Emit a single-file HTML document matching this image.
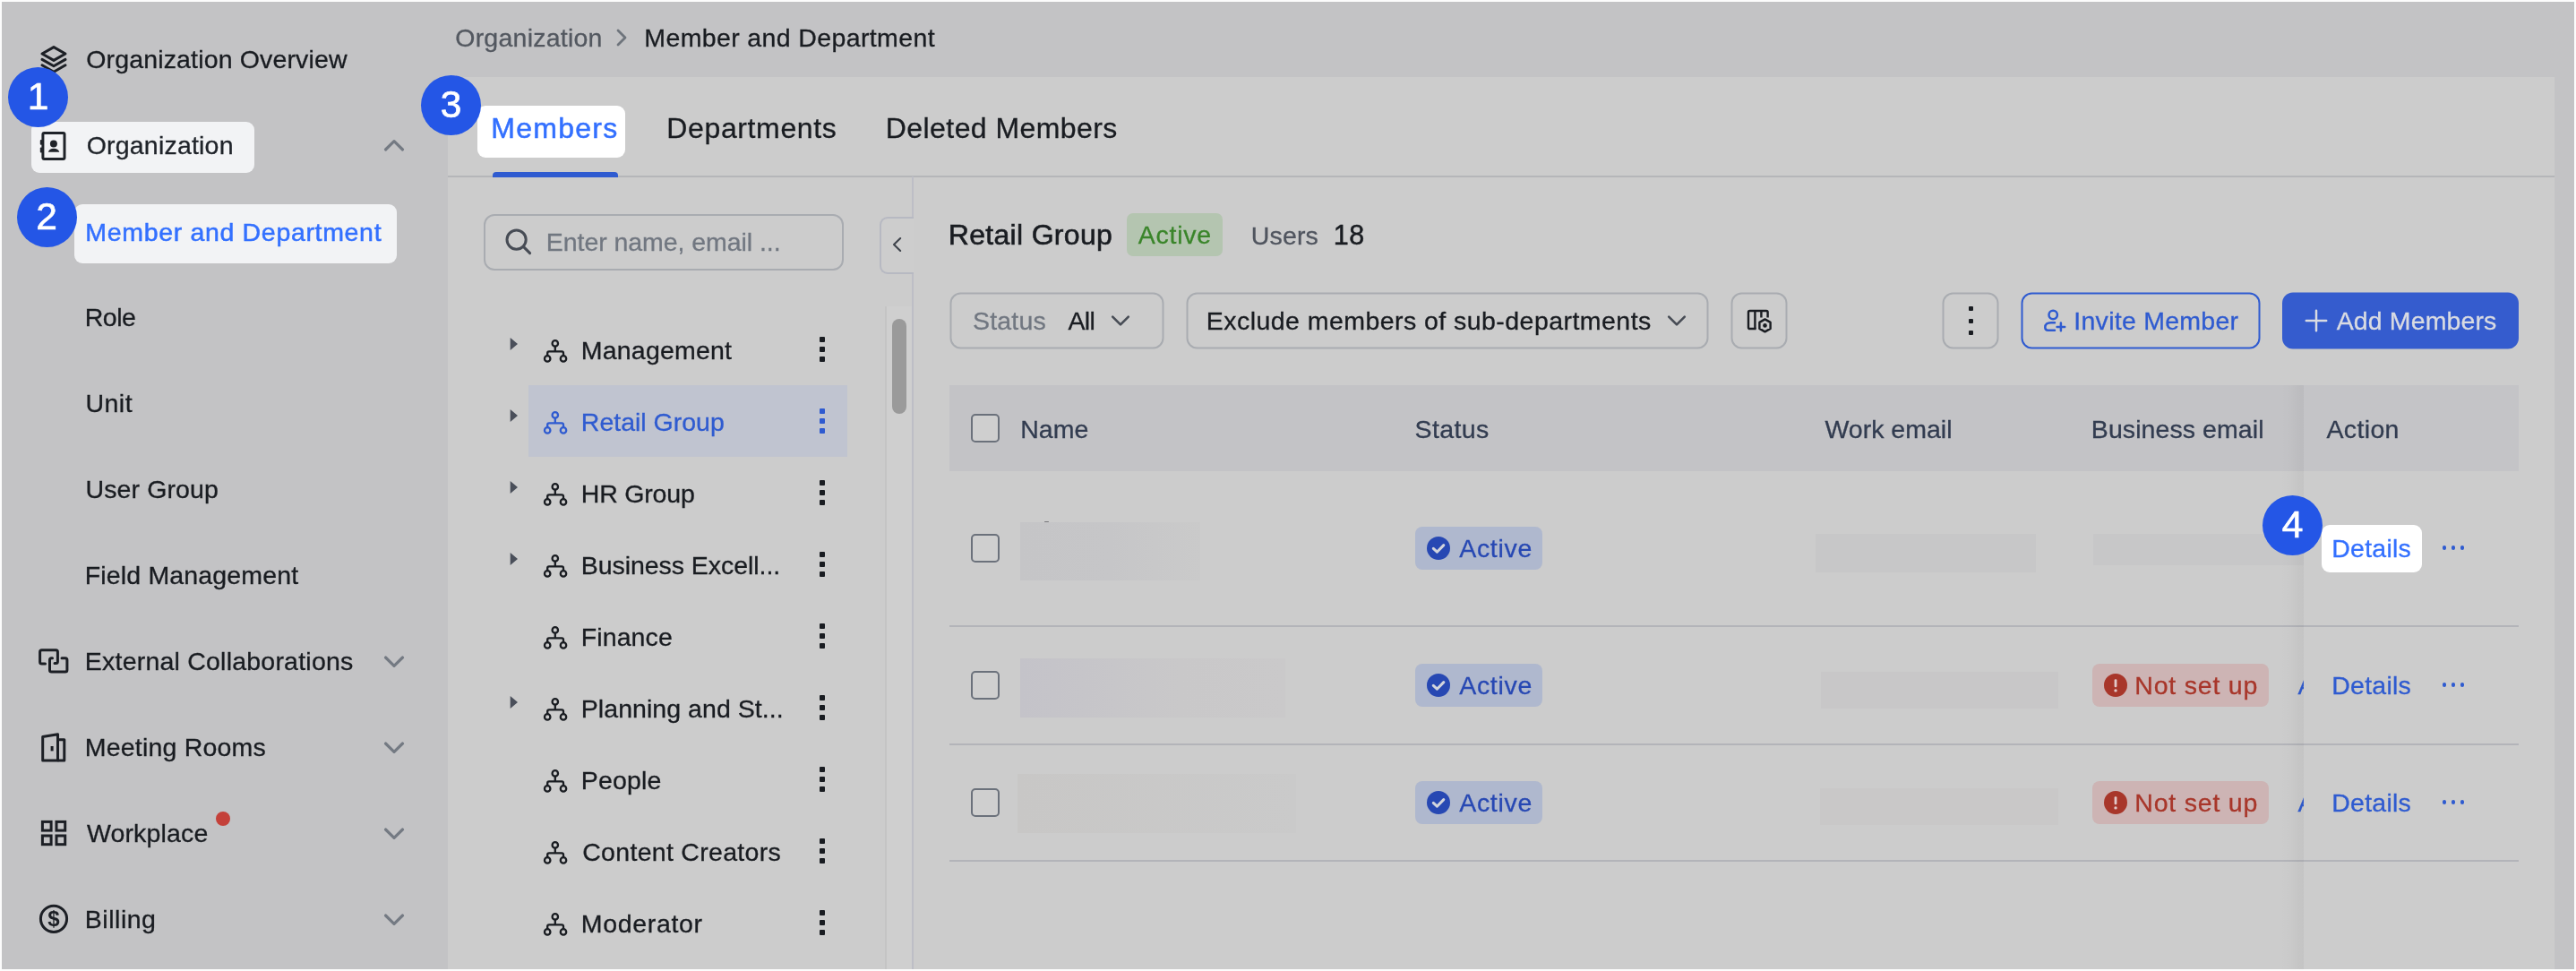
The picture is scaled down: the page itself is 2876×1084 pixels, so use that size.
<!DOCTYPE html>
<html lang="en">
<head>
<meta charset="utf-8">
<title>Member and Department</title>
<style>
html,body{margin:0;padding:0;}
body{width:2876px;height:1084px;overflow:hidden;background:#fdfdfd;font-family:"Liberation Sans",sans-serif;}
#w{will-change:transform;position:absolute;left:0;top:0;width:2876px;height:1084px;overflow:hidden;}
#w div,#w span,#w svg{position:absolute;box-sizing:border-box;}
#w svg{z-index:3;overflow:visible;}
.t{white-space:pre;z-index:3;}
.app{left:2px;top:2px;width:2872px;height:1080px;background:#c3c3c5;}
.panel{left:500px;top:86px;width:2352px;height:996px;background:#cccccc;}
.hl{border-radius:9px;z-index:5;}
.num{width:67px;height:67px;border-radius:50%;background:#2456e6;color:#fff;font-size:42.5px;line-height:65px;text-align:center;z-index:7;-webkit-text-stroke:0.7px #fff;}
.sel{border:2px solid #a9acb1;border-radius:12px;height:63px;top:326px;transform:translate(.5px,.5px);}
.cb{width:32px;height:32px;left:1084px;border:2px solid #6b717b;border-radius:5px;background:#cfcfcf;}
.sep{left:1060px;width:1752px;height:2px;background:#b3b4b9;}
.bdg{border-radius:8px;height:47.5px;}
.blur{background:#c7c7c8;}
.kb{width:6px;height:6px;background:#191c21;border-radius:1px;}
.dot{width:4.4px;height:4.4px;border-radius:50%;background:#2f5bd0;z-index:4;}
.frame{left:0;top:0;width:2876px;height:1084px;border:2px solid #fcfcfc;z-index:20;}
</style>
</head>
<body>
<div id="w">
<div class="app"></div>
<div class="panel"></div>

<!-- highlights -->
<div class="hl" style="left:35px;top:135.5px;width:248.5px;height:57px;background:#f2f3f5;"></div>
<div class="hl" style="left:83.3px;top:228.2px;width:359.7px;height:66.2px;background:#f2f3f5;"></div>
<div class="hl" style="left:533px;top:117.5px;width:164.5px;height:58.5px;background:#fff;"></div>
<div class="hl" style="left:2591.6px;top:586px;width:112.2px;height:52.5px;background:#fff;"></div>

<!-- step numbers -->
<div class="num" style="left:9px;top:75px;">1</div>
<div class="num" style="left:18.5px;top:209px;">2</div>
<div class="num" style="left:470px;top:83.5px;">3</div>
<div class="num" style="left:2526px;top:553px;">4</div>

<!-- tabs line -->
<div style="left:500px;top:196px;width:2352px;height:2px;background:linear-gradient(#c2c3c5 0,#c2c3c5 25%,#b5b6b9 25%);"></div>
<div style="left:550px;top:192px;width:140px;height:6px;background:#2f5bd0;border-radius:4px 4px 0 0;"></div>

<!-- sidebar icons -->
<svg style="left:44px;top:50px;width:32px;height:34px;" viewBox="0 0 32 34" fill="none"><g stroke="#1c1f25" stroke-width="3" stroke-linejoin="round" stroke-linecap="round"><path d="M16 2.6 L29 10 L16 17.4 L3 10 Z"/><path d="M3 16.4 L16 23.8 L29 16.4"/><path d="M3 22.8 L16 30.2 L29 22.8"/></g></svg>
<svg style="left:44px;top:146px;width:32px;height:34px;z-index:6;" viewBox="0 0 32 34" fill="none"><rect x="3.9" y="2.6" width="24.1" height="28.9" rx="1.5" stroke="#1f2329" stroke-width="3"/><rect x="0.8" y="10" width="2.4" height="5.8" rx="1" fill="#1f2329"/><rect x="0.8" y="18.6" width="2.4" height="6" rx="1" fill="#1f2329"/><circle cx="15.9" cy="14.6" r="4" fill="#1f2329"/><path d="M9.9 23.8 C10.5 21.2 13 19.7 16 19.7 C19 19.7 21.6 21.2 22.3 23.8 Z" fill="#1f2329"/></svg>
<svg style="left:42px;top:723px;width:36px;height:30px;" viewBox="0 0 36 30" fill="none"><g stroke="#1c1f25" stroke-width="3" stroke-linecap="round" stroke-linejoin="round"><path d="M8.5 18 H4.6 Q2.6 18 2.6 16 V4.7 Q2.6 2.7 4.6 2.7 H20.4 Q22.4 2.7 22.4 4.7 V15.5 Q22.4 17.5 20.4 17.5 H19"/><path d="M27 11.7 H30.9 Q32.9 11.7 32.9 13.7 V24.9 Q32.9 26.9 30.9 26.9 H15.5 Q13.5 26.9 13.5 24.9 V13.7 Q13.5 11.7 15.5 11.7 H16.5"/></g></svg>
<svg style="left:44px;top:816px;width:32px;height:36px;" viewBox="0 0 32 36" fill="none"><g stroke="#1c1f25" stroke-width="3" stroke-linejoin="round" stroke-linecap="butt"><path d="M3.7 6.6 L20.5 3.7 V33 H3.7 Z"/><path d="M20.5 9.8 H27.8 V33 H20.5"/></g><rect x="12.6" y="17" width="3" height="5.4" fill="#1c1f25"/></svg>
<svg style="left:44px;top:914px;width:32px;height:32px;" viewBox="0 0 32 32" fill="none"><g stroke="#1c1f25" stroke-width="3"><rect x="3.4" y="3.4" width="9.7" height="9.7"/><rect x="19" y="3.4" width="9.7" height="9.7"/><rect x="3.4" y="19" width="9.7" height="9.7"/><rect x="19" y="19" width="9.7" height="9.7"/></g></svg>
<svg style="left:42px;top:1008px;width:36px;height:36px;" viewBox="0 0 36 36" fill="none"><circle cx="18" cy="17.8" r="14.6" stroke="#1c1f25" stroke-width="3"/><text x="18" y="26" text-anchor="middle" font-family="Liberation Sans, sans-serif" font-weight="700" font-size="24" fill="#1c1f25">$</text></svg>
<div style="left:241px;top:906px;width:16px;height:16px;border-radius:50%;background:#c4413a;"></div>
<svg style="left:426px;top:152px;width:28px;height:20px;" viewBox="0 0 28 20" fill="none"><path d="M4.5 15 L14 5.7 L23.5 15" stroke="#747a83" stroke-width="3.2" stroke-linecap="round" stroke-linejoin="round"/></svg>
<svg style="left:426px;top:728.6px;width:28px;height:20px;" viewBox="0 0 28 20" fill="none"><path d="M4.5 5 L14 14.3 L23.5 5" stroke="#747a83" stroke-width="3.2" stroke-linecap="round" stroke-linejoin="round"/></svg>
<svg style="left:426px;top:824.6px;width:28px;height:20px;" viewBox="0 0 28 20" fill="none"><path d="M4.5 5 L14 14.3 L23.5 5" stroke="#747a83" stroke-width="3.2" stroke-linecap="round" stroke-linejoin="round"/></svg>
<svg style="left:426px;top:920.6px;width:28px;height:20px;" viewBox="0 0 28 20" fill="none"><path d="M4.5 5 L14 14.3 L23.5 5" stroke="#747a83" stroke-width="3.2" stroke-linecap="round" stroke-linejoin="round"/></svg>
<svg style="left:426px;top:1016.6px;width:28px;height:20px;" viewBox="0 0 28 20" fill="none"><path d="M4.5 5 L14 14.3 L23.5 5" stroke="#747a83" stroke-width="3.2" stroke-linecap="round" stroke-linejoin="round"/></svg>
<svg style="left:686px;top:30px;width:16px;height:24px;" viewBox="0 0 16 24" fill="none"><path d="M4 4 L12 12 L4 20" stroke="#6e747c" stroke-width="2.8" stroke-linecap="round" stroke-linejoin="round"/></svg>
<svg style="left:562px;top:253px;width:34px;height:34px;" viewBox="0 0 34 34" fill="none"><circle cx="14.6" cy="14.6" r="10.6" stroke="#474c55" stroke-width="3"/><path d="M22.6 22.6 L29.6 29.6" stroke="#474c55" stroke-width="3" stroke-linecap="round"/></svg>
<svg style="left:992px;top:261px;width:20px;height:24px;" viewBox="0 0 20 24" fill="none"><path d="M13.2 5 L6 12 L13.2 19" stroke="#3f444c" stroke-width="2.1" stroke-linecap="round" stroke-linejoin="round"/></svg>
<svg style="left:1238px;top:348px;width:26px;height:20px;" viewBox="0 0 26 20" fill="none"><path d="M4.2 5.6 L13 14.4 L21.8 5.6" stroke="#474c55" stroke-width="2.6" stroke-linecap="round" stroke-linejoin="round"/></svg>
<svg style="left:1859px;top:348px;width:26px;height:20px;" viewBox="0 0 26 20" fill="none"><path d="M4.2 5.6 L13 14.4 L21.8 5.6" stroke="#474c55" stroke-width="2.6" stroke-linecap="round" stroke-linejoin="round"/></svg>
<svg style="left:1948px;top:343px;width:32px;height:32px;" viewBox="0 0 32 32" fill="none"><g stroke="#191c21" stroke-width="2.4" stroke-linejoin="round" stroke-linecap="butt"><path d="M12.6 24 H5.6 Q4 24 4 22.4 V5.6 Q4 4 5.6 4 H24 Q25.6 4 25.6 5.6 V11.5"/><path d="M11.4 4 V24"/><path d="M18.4 4 V11.5"/><path d="M22.5 13.4 L28.6 16.9 V23.9 L22.5 27.4 L16.4 23.9 V16.9 Z"/></g><circle cx="22.5" cy="20.4" r="2.3" fill="#191c21"/></svg>
<svg style="left:2280px;top:343px;width:28px;height:30px;" viewBox="0 0 28 30" fill="none"><g stroke="#2f5bd0" stroke-width="2.5" stroke-linecap="round" stroke-linejoin="round"><circle cx="12.2" cy="8.5" r="4.7"/><path d="M14 17.3 H10 Q3.3 17.3 3.3 22.5 Q3.3 25.7 6.5 25.7 H14"/><path d="M20.9 17.6 V26.2 M16.6 21.9 H25.2"/></g></svg>
<svg style="left:2572px;top:344px;width:28px;height:28px;" viewBox="0 0 28 28" fill="none"><path d="M14 2.8 V25.2 M2.8 14 H25.2" stroke="#d9dbe2" stroke-width="2.5" stroke-linecap="round"/></svg>
<svg style="left:1592px;top:598px;width:28px;height:28px;" viewBox="0 0 28 28" fill="none"><circle cx="14" cy="14" r="13" fill="#2748b3"/><path d="M8.3 14.3 L12.4 18.2 L19.8 10.6" stroke="#d2d4dc" stroke-width="3" stroke-linecap="round" stroke-linejoin="round"/></svg>
<svg style="left:1592px;top:751px;width:28px;height:28px;" viewBox="0 0 28 28" fill="none"><circle cx="14" cy="14" r="13" fill="#2748b3"/><path d="M8.3 14.3 L12.4 18.2 L19.8 10.6" stroke="#d2d4dc" stroke-width="3" stroke-linecap="round" stroke-linejoin="round"/></svg>
<svg style="left:1592px;top:882px;width:28px;height:28px;" viewBox="0 0 28 28" fill="none"><circle cx="14" cy="14" r="13" fill="#2748b3"/><path d="M8.3 14.3 L12.4 18.2 L19.8 10.6" stroke="#d2d4dc" stroke-width="3" stroke-linecap="round" stroke-linejoin="round"/></svg>
<svg style="left:2348px;top:751px;width:28px;height:28px;" viewBox="0 0 28 28" fill="none"><circle cx="14" cy="14" r="13" fill="#a8362a"/><rect x="12.6" y="7.2" width="2.8" height="9" rx="1.2" fill="#e2c9c9"/><circle cx="14" cy="19.9" r="1.7" fill="#e2c9c9"/></svg>
<svg style="left:2348px;top:882px;width:28px;height:28px;" viewBox="0 0 28 28" fill="none"><circle cx="14" cy="14" r="13" fill="#a8362a"/><rect x="12.6" y="7.2" width="2.8" height="9" rx="1.2" fill="#e2c9c9"/><circle cx="14" cy="19.9" r="1.7" fill="#e2c9c9"/></svg>

<!-- tree panel -->
<div style="left:540px;top:238.5px;width:402px;height:63px;border:2px solid #a9acb1;border-radius:12px;"></div>
<div style="left:1018px;top:197px;width:2px;height:885px;background:#bdbec6;"></div>
<div style="left:982px;top:242px;width:38px;height:63.5px;border:2px solid #b7b9c2;border-right:none;border-radius:9px 0 0 9px;background:#cdcdcd;"></div>
<div style="left:988px;top:342px;width:30px;height:740px;background:#cfcfcf;border-left:2px solid #c4c4c4;"></div>
<div style="left:996px;top:356px;width:16px;height:106px;background:#9a9a9a;border-radius:8px;"></div>
<div style="left:590px;top:430px;width:356px;height:80px;background:#c0c4d0;"></div>
<svg style="left:568px;top:375px;width:12px;height:18px;" viewBox="0 0 12 18" fill="none"><path d="M1.7 2 L10 9 L1.7 16 Z" fill="#4a4f5a"/></svg>
<svg style="left:605px;top:378px;width:30px;height:30px;" viewBox="0 0 30 30" fill="none"><g stroke="#191c21" stroke-width="2.3" stroke-linecap="round" stroke-linejoin="round"><circle cx="14.8" cy="5.4" r="3.2"/><circle cx="6.2" cy="22.4" r="3.2"/><circle cx="24" cy="22.4" r="3.2"/><path d="M14.8 8.8 V14.4 M6.2 19 V16.2 Q6.2 14.4 8 14.4 H22.2 Q24 14.4 24 16.2 V19"/></g></svg>
<div class="kb" style="left:914.8px;top:376px;background:#191c21;"></div>
<div class="kb" style="left:914.8px;top:387px;background:#191c21;"></div>
<div class="kb" style="left:914.8px;top:398px;background:#191c21;"></div>
<svg style="left:568px;top:455px;width:12px;height:18px;" viewBox="0 0 12 18" fill="none"><path d="M1.7 2 L10 9 L1.7 16 Z" fill="#4a4f5a"/></svg>
<svg style="left:605px;top:458px;width:30px;height:30px;" viewBox="0 0 30 30" fill="none"><g stroke="#2f5bd0" stroke-width="2.3" stroke-linecap="round" stroke-linejoin="round"><circle cx="14.8" cy="5.4" r="3.2"/><circle cx="6.2" cy="22.4" r="3.2"/><circle cx="24" cy="22.4" r="3.2"/><path d="M14.8 8.8 V14.4 M6.2 19 V16.2 Q6.2 14.4 8 14.4 H22.2 Q24 14.4 24 16.2 V19"/></g></svg>
<div class="kb" style="left:914.8px;top:456px;background:#2f5bd0;"></div>
<div class="kb" style="left:914.8px;top:467px;background:#2f5bd0;"></div>
<div class="kb" style="left:914.8px;top:478px;background:#2f5bd0;"></div>
<svg style="left:568px;top:535px;width:12px;height:18px;" viewBox="0 0 12 18" fill="none"><path d="M1.7 2 L10 9 L1.7 16 Z" fill="#4a4f5a"/></svg>
<svg style="left:605px;top:538px;width:30px;height:30px;" viewBox="0 0 30 30" fill="none"><g stroke="#191c21" stroke-width="2.3" stroke-linecap="round" stroke-linejoin="round"><circle cx="14.8" cy="5.4" r="3.2"/><circle cx="6.2" cy="22.4" r="3.2"/><circle cx="24" cy="22.4" r="3.2"/><path d="M14.8 8.8 V14.4 M6.2 19 V16.2 Q6.2 14.4 8 14.4 H22.2 Q24 14.4 24 16.2 V19"/></g></svg>
<div class="kb" style="left:914.8px;top:536px;background:#191c21;"></div>
<div class="kb" style="left:914.8px;top:547px;background:#191c21;"></div>
<div class="kb" style="left:914.8px;top:558px;background:#191c21;"></div>
<svg style="left:568px;top:615px;width:12px;height:18px;" viewBox="0 0 12 18" fill="none"><path d="M1.7 2 L10 9 L1.7 16 Z" fill="#4a4f5a"/></svg>
<svg style="left:605px;top:618px;width:30px;height:30px;" viewBox="0 0 30 30" fill="none"><g stroke="#191c21" stroke-width="2.3" stroke-linecap="round" stroke-linejoin="round"><circle cx="14.8" cy="5.4" r="3.2"/><circle cx="6.2" cy="22.4" r="3.2"/><circle cx="24" cy="22.4" r="3.2"/><path d="M14.8 8.8 V14.4 M6.2 19 V16.2 Q6.2 14.4 8 14.4 H22.2 Q24 14.4 24 16.2 V19"/></g></svg>
<div class="kb" style="left:914.8px;top:616px;background:#191c21;"></div>
<div class="kb" style="left:914.8px;top:627px;background:#191c21;"></div>
<div class="kb" style="left:914.8px;top:638px;background:#191c21;"></div>
<svg style="left:605px;top:698px;width:30px;height:30px;" viewBox="0 0 30 30" fill="none"><g stroke="#191c21" stroke-width="2.3" stroke-linecap="round" stroke-linejoin="round"><circle cx="14.8" cy="5.4" r="3.2"/><circle cx="6.2" cy="22.4" r="3.2"/><circle cx="24" cy="22.4" r="3.2"/><path d="M14.8 8.8 V14.4 M6.2 19 V16.2 Q6.2 14.4 8 14.4 H22.2 Q24 14.4 24 16.2 V19"/></g></svg>
<div class="kb" style="left:914.8px;top:696px;background:#191c21;"></div>
<div class="kb" style="left:914.8px;top:707px;background:#191c21;"></div>
<div class="kb" style="left:914.8px;top:718px;background:#191c21;"></div>
<svg style="left:568px;top:775px;width:12px;height:18px;" viewBox="0 0 12 18" fill="none"><path d="M1.7 2 L10 9 L1.7 16 Z" fill="#4a4f5a"/></svg>
<svg style="left:605px;top:778px;width:30px;height:30px;" viewBox="0 0 30 30" fill="none"><g stroke="#191c21" stroke-width="2.3" stroke-linecap="round" stroke-linejoin="round"><circle cx="14.8" cy="5.4" r="3.2"/><circle cx="6.2" cy="22.4" r="3.2"/><circle cx="24" cy="22.4" r="3.2"/><path d="M14.8 8.8 V14.4 M6.2 19 V16.2 Q6.2 14.4 8 14.4 H22.2 Q24 14.4 24 16.2 V19"/></g></svg>
<div class="kb" style="left:914.8px;top:776px;background:#191c21;"></div>
<div class="kb" style="left:914.8px;top:787px;background:#191c21;"></div>
<div class="kb" style="left:914.8px;top:798px;background:#191c21;"></div>
<svg style="left:605px;top:858px;width:30px;height:30px;" viewBox="0 0 30 30" fill="none"><g stroke="#191c21" stroke-width="2.3" stroke-linecap="round" stroke-linejoin="round"><circle cx="14.8" cy="5.4" r="3.2"/><circle cx="6.2" cy="22.4" r="3.2"/><circle cx="24" cy="22.4" r="3.2"/><path d="M14.8 8.8 V14.4 M6.2 19 V16.2 Q6.2 14.4 8 14.4 H22.2 Q24 14.4 24 16.2 V19"/></g></svg>
<div class="kb" style="left:914.8px;top:856px;background:#191c21;"></div>
<div class="kb" style="left:914.8px;top:867px;background:#191c21;"></div>
<div class="kb" style="left:914.8px;top:878px;background:#191c21;"></div>
<svg style="left:605px;top:938px;width:30px;height:30px;" viewBox="0 0 30 30" fill="none"><g stroke="#191c21" stroke-width="2.3" stroke-linecap="round" stroke-linejoin="round"><circle cx="14.8" cy="5.4" r="3.2"/><circle cx="6.2" cy="22.4" r="3.2"/><circle cx="24" cy="22.4" r="3.2"/><path d="M14.8 8.8 V14.4 M6.2 19 V16.2 Q6.2 14.4 8 14.4 H22.2 Q24 14.4 24 16.2 V19"/></g></svg>
<div class="kb" style="left:914.8px;top:936px;background:#191c21;"></div>
<div class="kb" style="left:914.8px;top:947px;background:#191c21;"></div>
<div class="kb" style="left:914.8px;top:958px;background:#191c21;"></div>
<svg style="left:605px;top:1018px;width:30px;height:30px;" viewBox="0 0 30 30" fill="none"><g stroke="#191c21" stroke-width="2.3" stroke-linecap="round" stroke-linejoin="round"><circle cx="14.8" cy="5.4" r="3.2"/><circle cx="6.2" cy="22.4" r="3.2"/><circle cx="24" cy="22.4" r="3.2"/><path d="M14.8 8.8 V14.4 M6.2 19 V16.2 Q6.2 14.4 8 14.4 H22.2 Q24 14.4 24 16.2 V19"/></g></svg>
<div class="kb" style="left:914.8px;top:1016px;background:#191c21;"></div>
<div class="kb" style="left:914.8px;top:1027px;background:#191c21;"></div>
<div class="kb" style="left:914.8px;top:1038px;background:#191c21;"></div>

<!-- right panel head -->
<div class="bdg" style="left:1258px;top:238px;width:107px;height:48px;background:#b4c5b0;border-radius:7px;"></div>

<!-- toolbar -->
<div class="sel" style="left:1060px;width:239px;"></div>
<div class="sel" style="left:1324px;width:583px;"></div>
<div class="sel" style="left:1932px;width:63px;"></div>
<div class="sel" style="left:2168px;width:63px;"></div>
<div class="sel" style="left:2256px;width:267px;border-color:#2f5bd0;"></div>
<div class="sel" style="left:2548px;width:264px;border:none;background:#355cce;transform:translate(0,.5px);"></div>
<div class="kb" style="left:2197.5px;top:342px;width:5px;height:5px;"></div>
<div class="kb" style="left:2197.5px;top:355.5px;width:5px;height:5px;"></div>
<div class="kb" style="left:2197.5px;top:369px;width:5px;height:5px;"></div>

<!-- table -->
<div style="left:1060px;top:430px;width:1752px;height:96px;background:#c3c3c6;"></div>
<div class="cb" style="top:461.5px;"></div>
<div class="cb" style="top:596px;"></div>
<div class="cb" style="top:749px;"></div>
<div class="cb" style="top:880px;"></div>
<div class="sep" style="top:698px;"></div>
<div class="sep" style="top:830px;"></div>
<div class="sep" style="top:960px;"></div>

<div class="blur" style="left:1138.7px;top:583px;width:201.3px;height:64.5px;background:linear-gradient(90deg,#c5c5c7,#c6c6c8 50%,#cacaca);"></div>
<div style="left:1166px;top:582px;width:5px;height:1px;background:#77777b;border-radius:1px;"></div>
<div class="blur" style="left:1139px;top:735px;width:296px;height:66px;background:linear-gradient(90deg,#c4c3c9,#c9c8c9 60%,#cac9ca);"></div>
<div class="blur" style="left:1136px;top:863.5px;width:311px;height:66.5px;background:linear-gradient(90deg,#c8c7c6,#cacaca);"></div>
<div class="blur" style="left:2027px;top:596px;width:246px;height:43px;"></div>
<div class="blur" style="left:2033px;top:750px;width:265px;height:40.5px;background:#c8c7c8;"></div>
<div class="blur" style="left:2032px;top:880px;width:266px;height:41px;background:#c9c8c8;"></div>
<div class="blur" style="left:2336.5px;top:596px;width:236px;height:35px;"></div>

<div class="bdg" style="left:1580px;top:588.25px;width:142px;background:#afb8ce;"></div>
<div class="bdg" style="left:1580px;top:741.25px;width:142px;background:#afb8ce;"></div>
<div class="bdg" style="left:1580px;top:872.25px;width:142px;background:#afb8ce;"></div>
<div class="bdg" style="left:2336px;top:741.25px;width:197px;background:#cdb4b4;"></div>
<div class="bdg" style="left:2336px;top:872.25px;width:197px;background:#cdb4b4;"></div>

<!-- fixed action column -->
<div style="left:2546px;top:430px;width:26px;height:652px;background:linear-gradient(90deg,rgba(0,0,0,0),rgba(0,0,0,.012) 45%,rgba(0,0,0,.03) 75%,rgba(0,0,0,.04));z-index:2;"></div>
<div style="left:2572px;top:526px;width:280px;height:556px;background:#cccccc;z-index:2;"></div>
<div style="left:2572px;top:430px;width:240px;height:96px;background:#c4c4c7;z-index:2;"></div>
<div class="sep" style="top:698px;left:2572px;width:240px;z-index:3;"></div>
<div class="sep" style="top:830px;left:2572px;width:240px;z-index:3;"></div>
<div class="sep" style="top:960px;left:2572px;width:240px;z-index:3;"></div>
<div class="dot" style="left:2726.8px;top:609.3px;"></div>
<div class="dot" style="left:2736.8px;top:609.3px;"></div>
<div class="dot" style="left:2746.8px;top:609.3px;"></div>
<div class="dot" style="left:2726.8px;top:762.3px;"></div>
<div class="dot" style="left:2736.8px;top:762.3px;"></div>
<div class="dot" style="left:2746.8px;top:762.3px;"></div>
<div class="dot" style="left:2726.8px;top:893.3px;"></div>
<div class="dot" style="left:2736.8px;top:893.3px;"></div>
<div class="dot" style="left:2746.8px;top:893.3px;"></div>

<span class="t" style="left:96.22px;top:46.33px;font-size:28.5px;line-height:40px;color:#191c21;letter-spacing:0.153px;-webkit-text-stroke:0.3px #191c21;">Organization Overview</span>
<span class="t" style="left:96.72px;top:142.33px;font-size:28.5px;line-height:40px;color:#1f2329;letter-spacing:0.197px;-webkit-text-stroke:0.3px #1f2329;z-index:6;">Organization</span>
<span class="t" style="left:95.32px;top:238.63px;font-size:28.5px;line-height:40px;color:#3370ff;letter-spacing:0.672px;-webkit-text-stroke:0.5px #3370ff;z-index:6;">Member and Department</span>
<span class="t" style="left:94.82px;top:334.33px;font-size:28.5px;line-height:40px;color:#191c21;letter-spacing:-0.555px;-webkit-text-stroke:0.3px #191c21;">Role</span>
<span class="t" style="left:95.52px;top:430.33px;font-size:28.5px;line-height:40px;color:#191c21;letter-spacing:0.457px;-webkit-text-stroke:0.3px #191c21;">Unit</span>
<span class="t" style="left:95.52px;top:526.33px;font-size:28.5px;line-height:40px;color:#191c21;letter-spacing:0.105px;-webkit-text-stroke:0.3px #191c21;">User Group</span>
<span class="t" style="left:94.82px;top:622.33px;font-size:28.5px;line-height:40px;color:#191c21;letter-spacing:0.148px;-webkit-text-stroke:0.3px #191c21;">Field Management</span>
<span class="t" style="left:94.82px;top:718.33px;font-size:28.5px;line-height:40px;color:#191c21;letter-spacing:0.218px;-webkit-text-stroke:0.3px #191c21;">External Collaborations</span>
<span class="t" style="left:94.82px;top:814.33px;font-size:28.5px;line-height:40px;color:#191c21;letter-spacing:0.197px;-webkit-text-stroke:0.3px #191c21;">Meeting Rooms</span>
<span class="t" style="left:96.92px;top:910.33px;font-size:28.5px;line-height:40px;color:#191c21;letter-spacing:0.156px;-webkit-text-stroke:0.3px #191c21;">Workplace</span>
<span class="t" style="left:94.82px;top:1006.33px;font-size:28.5px;line-height:40px;color:#191c21;letter-spacing:0.519px;-webkit-text-stroke:0.3px #191c21;">Billing</span>
<span class="t" style="left:508.22px;top:22.33px;font-size:28.5px;line-height:40px;color:#535860;letter-spacing:0.242px;-webkit-text-stroke:0.3px #535860;">Organization</span>
<span class="t" style="left:719.32px;top:22.33px;font-size:28.5px;line-height:40px;color:#191c21;letter-spacing:0.372px;-webkit-text-stroke:0.3px #191c21;">Member and Department</span>
<span class="t" style="left:548.32px;top:120.87px;font-size:32px;line-height:45px;color:#3370ff;letter-spacing:1.267px;-webkit-text-stroke:0.5px #3370ff;z-index:6;">Members</span>
<span class="t" style="left:744.32px;top:120.87px;font-size:32px;line-height:45px;color:#191c21;letter-spacing:0.627px;-webkit-text-stroke:0.3px #191c21;">Departments</span>
<span class="t" style="left:988.82px;top:120.87px;font-size:32px;line-height:45px;color:#191c21;letter-spacing:0.422px;-webkit-text-stroke:0.3px #191c21;">Deleted Members</span>
<span class="t" style="left:648.82px;top:371.33px;font-size:28.5px;line-height:40px;color:#191c21;letter-spacing:0.205px;-webkit-text-stroke:0.3px #191c21;">Management</span>
<span class="t" style="left:648.82px;top:451.33px;font-size:28.5px;line-height:40px;color:#2f5bd0;-webkit-text-stroke:0.3px #2f5bd0;">Retail Group</span>
<span class="t" style="left:648.82px;top:531.33px;font-size:28.5px;line-height:40px;color:#191c21;letter-spacing:-0.191px;-webkit-text-stroke:0.3px #191c21;">HR Group</span>
<span class="t" style="left:648.82px;top:611.33px;font-size:28.5px;line-height:40px;color:#191c21;letter-spacing:-0.058px;-webkit-text-stroke:0.3px #191c21;">Business Excell...</span>
<span class="t" style="left:648.82px;top:691.33px;font-size:28.5px;line-height:40px;color:#191c21;letter-spacing:0.092px;-webkit-text-stroke:0.3px #191c21;">Finance</span>
<span class="t" style="left:648.82px;top:771.33px;font-size:28.5px;line-height:40px;color:#191c21;letter-spacing:0.051px;-webkit-text-stroke:0.3px #191c21;">Planning and St...</span>
<span class="t" style="left:648.82px;top:851.33px;font-size:28.5px;line-height:40px;color:#191c21;letter-spacing:0.142px;-webkit-text-stroke:0.3px #191c21;">People</span>
<span class="t" style="left:650.22px;top:931.33px;font-size:28.5px;line-height:40px;color:#191c21;letter-spacing:0.302px;-webkit-text-stroke:0.3px #191c21;">Content Creators</span>
<span class="t" style="left:648.82px;top:1011.33px;font-size:28.5px;line-height:40px;color:#191c21;letter-spacing:0.669px;-webkit-text-stroke:0.3px #191c21;">Moderator</span>
<span class="t" style="left:609.82px;top:250.33px;font-size:28.5px;line-height:40px;color:#717781;letter-spacing:-0.055px;-webkit-text-stroke:0.3px #717781;">Enter name, email ...</span>
<span class="t" style="left:1058.82px;top:240.37px;font-size:32px;line-height:45px;color:#191c21;letter-spacing:0.302px;-webkit-text-stroke:0.6px #191c21;">Retail Group</span>
<span class="t" style="left:1270.72px;top:241.93px;font-size:28.5px;line-height:40px;color:#3a852a;letter-spacing:0.751px;-webkit-text-stroke:0.3px #3a852a;">Active</span>
<span class="t" style="left:1396.76px;top:243.13px;font-size:28.5px;line-height:40px;color:#50555f;letter-spacing:0.161px;-webkit-text-stroke:0.3px #50555f;">Users</span>
<span class="t" style="left:1488.76px;top:241.15px;font-size:30.5px;line-height:43px;color:#191c21;letter-spacing:0.462px;-webkit-text-stroke:0.5px #191c21;">18</span>
<span class="t" style="left:1086.02px;top:338.33px;font-size:28.5px;line-height:40px;color:#717781;letter-spacing:0.193px;-webkit-text-stroke:0.3px #717781;">Status</span>
<span class="t" style="left:1192.42px;top:338.33px;font-size:28.5px;line-height:40px;color:#191c21;letter-spacing:-0.564px;-webkit-text-stroke:0.3px #191c21;">All</span>
<span class="t" style="left:1346.82px;top:338.33px;font-size:28.5px;line-height:40px;color:#191c21;letter-spacing:0.451px;-webkit-text-stroke:0.3px #191c21;">Exclude members of sub-departments</span>
<span class="t" style="left:2315.32px;top:338.33px;font-size:28.5px;line-height:40px;color:#2f5bd0;letter-spacing:0.266px;-webkit-text-stroke:0.3px #2f5bd0;">Invite Member</span>
<span class="t" style="left:2608.72px;top:338.33px;font-size:28.5px;line-height:40px;color:#d9dbe2;letter-spacing:0.115px;-webkit-text-stroke:0.3px #d9dbe2;">Add Members</span>
<span class="t" style="left:1139.32px;top:459.33px;font-size:28.5px;line-height:40px;color:#323c50;letter-spacing:-0.024px;-webkit-text-stroke:0.3px #323c50;">Name</span>
<span class="t" style="left:1579.52px;top:459.33px;font-size:28.5px;line-height:40px;color:#323c50;letter-spacing:0.393px;-webkit-text-stroke:0.3px #323c50;">Status</span>
<span class="t" style="left:2037.42px;top:459.33px;font-size:28.5px;line-height:40px;color:#323c50;letter-spacing:0.007px;-webkit-text-stroke:0.3px #323c50;">Work email</span>
<span class="t" style="left:2334.82px;top:459.33px;font-size:28.5px;line-height:40px;color:#323c50;letter-spacing:0.076px;-webkit-text-stroke:0.3px #323c50;">Business email</span>
<span class="t" style="left:2597.42px;top:459.33px;font-size:28.5px;line-height:40px;color:#323c50;letter-spacing:0.368px;-webkit-text-stroke:0.3px #323c50;z-index:4;">Action</span>
<span class="t" style="left:1629.22px;top:592.33px;font-size:28.5px;line-height:40px;color:#2748b3;letter-spacing:0.687px;-webkit-text-stroke:0.3px #2748b3;">Active</span>
<span class="t" style="left:1629.22px;top:745.33px;font-size:28.5px;line-height:40px;color:#2748b3;letter-spacing:0.687px;-webkit-text-stroke:0.3px #2748b3;">Active</span>
<span class="t" style="left:1629.22px;top:876.33px;font-size:28.5px;line-height:40px;color:#2748b3;letter-spacing:0.687px;-webkit-text-stroke:0.3px #2748b3;">Active</span>
<span class="t" style="left:2603.32px;top:592.33px;font-size:28.5px;line-height:40px;color:#3370ff;letter-spacing:0.222px;-webkit-text-stroke:0.3px #3370ff;z-index:6;">Details</span>
<span class="t" style="left:2603.32px;top:745.33px;font-size:28.5px;line-height:40px;color:#2f5bd0;letter-spacing:0.222px;-webkit-text-stroke:0.3px #2f5bd0;z-index:4;">Details</span>
<span class="t" style="left:2603.32px;top:876.33px;font-size:28.5px;line-height:40px;color:#2f5bd0;letter-spacing:0.222px;-webkit-text-stroke:0.3px #2f5bd0;z-index:4;">Details</span>
<span class="t" style="left:2383.32px;top:745.33px;font-size:28.5px;line-height:40px;color:#a8362a;letter-spacing:0.784px;-webkit-text-stroke:0.3px #a8362a;">Not set up</span>
<span class="t" style="left:2565.50px;top:745.33px;font-size:28.5px;line-height:40px;color:#2f5bd0;-webkit-text-stroke:0.3px #2f5bd0;z-index:1;">A</span>
<span class="t" style="left:2383.32px;top:876.33px;font-size:28.5px;line-height:40px;color:#a8362a;letter-spacing:0.784px;-webkit-text-stroke:0.3px #a8362a;">Not set up</span>
<span class="t" style="left:2565.50px;top:876.33px;font-size:28.5px;line-height:40px;color:#2f5bd0;-webkit-text-stroke:0.3px #2f5bd0;z-index:1;">A</span>
<div class="frame"></div>
</div>
</body>
</html>
